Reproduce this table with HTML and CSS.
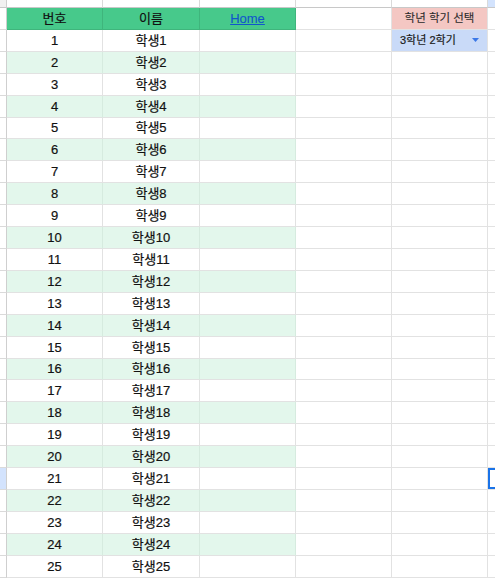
FILE: index.html
```html
<!DOCTYPE html>
<html lang="ko">
<head>
<meta charset="utf-8">
<link rel="stylesheet" href="styles.css">
</head>
<body>
<div class="sheet">
  <div class="row top"><div class="rh corner"></div><div class="ch"></div><div class="ch"></div><div class="ch"></div><div class="ch"></div><div class="ch"></div><div class="ch sel"></div></div>
  <div class="row"><div class="rh"></div><div class="c hd">번호</div><div class="c hd">이름</div><div class="c hd"><a class="link" href="#">Home</a></div><div class="c"></div><div class="c pink">학년 학기 선택</div><div class="c edge"></div></div>
  <div class="row"><div class="rh"></div><div class="c">1</div><div class="c">학생1</div><div class="c"></div><div class="c"></div><div class="c drop"><span>3학년 2학기</span><svg class="arrow" width="7" height="4" viewBox="0 0 7 4"><path d="M0 0h7L3.5 4z" fill="#3b78e7"/></svg></div><div class="c edge"></div></div>
  <div class="row alt"><div class="rh"></div><div class="c">2</div><div class="c">학생2</div><div class="c"></div><div class="c"></div><div class="c"></div><div class="c edge"></div></div>
  <div class="row"><div class="rh"></div><div class="c">3</div><div class="c">학생3</div><div class="c"></div><div class="c"></div><div class="c"></div><div class="c edge"></div></div>
  <div class="row alt"><div class="rh"></div><div class="c">4</div><div class="c">학생4</div><div class="c"></div><div class="c"></div><div class="c"></div><div class="c edge"></div></div>
  <div class="row"><div class="rh"></div><div class="c">5</div><div class="c">학생5</div><div class="c"></div><div class="c"></div><div class="c"></div><div class="c edge"></div></div>
  <div class="row alt"><div class="rh"></div><div class="c">6</div><div class="c">학생6</div><div class="c"></div><div class="c"></div><div class="c"></div><div class="c edge"></div></div>
  <div class="row"><div class="rh"></div><div class="c">7</div><div class="c">학생7</div><div class="c"></div><div class="c"></div><div class="c"></div><div class="c edge"></div></div>
  <div class="row alt"><div class="rh"></div><div class="c">8</div><div class="c">학생8</div><div class="c"></div><div class="c"></div><div class="c"></div><div class="c edge"></div></div>
  <div class="row"><div class="rh"></div><div class="c">9</div><div class="c">학생9</div><div class="c"></div><div class="c"></div><div class="c"></div><div class="c edge"></div></div>
  <div class="row alt"><div class="rh"></div><div class="c">10</div><div class="c">학생10</div><div class="c"></div><div class="c"></div><div class="c"></div><div class="c edge"></div></div>
  <div class="row"><div class="rh"></div><div class="c">11</div><div class="c">학생11</div><div class="c"></div><div class="c"></div><div class="c"></div><div class="c edge"></div></div>
  <div class="row alt"><div class="rh"></div><div class="c">12</div><div class="c">학생12</div><div class="c"></div><div class="c"></div><div class="c"></div><div class="c edge"></div></div>
  <div class="row"><div class="rh"></div><div class="c">13</div><div class="c">학생13</div><div class="c"></div><div class="c"></div><div class="c"></div><div class="c edge"></div></div>
  <div class="row alt"><div class="rh"></div><div class="c">14</div><div class="c">학생14</div><div class="c"></div><div class="c"></div><div class="c"></div><div class="c edge"></div></div>
  <div class="row"><div class="rh"></div><div class="c">15</div><div class="c">학생15</div><div class="c"></div><div class="c"></div><div class="c"></div><div class="c edge"></div></div>
  <div class="row alt"><div class="rh"></div><div class="c">16</div><div class="c">학생16</div><div class="c"></div><div class="c"></div><div class="c"></div><div class="c edge"></div></div>
  <div class="row"><div class="rh"></div><div class="c">17</div><div class="c">학생17</div><div class="c"></div><div class="c"></div><div class="c"></div><div class="c edge"></div></div>
  <div class="row alt"><div class="rh"></div><div class="c">18</div><div class="c">학생18</div><div class="c"></div><div class="c"></div><div class="c"></div><div class="c edge"></div></div>
  <div class="row"><div class="rh"></div><div class="c">19</div><div class="c">학생19</div><div class="c"></div><div class="c"></div><div class="c"></div><div class="c edge"></div></div>
  <div class="row alt"><div class="rh"></div><div class="c">20</div><div class="c">학생20</div><div class="c"></div><div class="c"></div><div class="c"></div><div class="c edge"></div></div>
  <div class="row"><div class="rh selrow"></div><div class="c">21</div><div class="c">학생21</div><div class="c"></div><div class="c"></div><div class="c"></div><div class="c edge active"></div></div>
  <div class="row alt"><div class="rh"></div><div class="c">22</div><div class="c">학생22</div><div class="c"></div><div class="c"></div><div class="c"></div><div class="c edge"></div></div>
  <div class="row"><div class="rh"></div><div class="c">23</div><div class="c">학생23</div><div class="c"></div><div class="c"></div><div class="c"></div><div class="c edge"></div></div>
  <div class="row alt"><div class="rh"></div><div class="c">24</div><div class="c">학생24</div><div class="c"></div><div class="c"></div><div class="c"></div><div class="c edge"></div></div>
  <div class="row"><div class="rh"></div><div class="c">25</div><div class="c">학생25</div><div class="c"></div><div class="c"></div><div class="c"></div><div class="c edge"></div></div>
</div>
</body>
</html>
```

FILE: styles.css
```css
html, body {
  margin: 0;
  padding: 0;
  background: #ffffff;
}
body {
  font-family: "Liberation Sans", "Noto Sans CJK KR", Arial, sans-serif;
  font-size: 13px;
  color: #111111;
  width: 495px;
  height: 582px;
  overflow: hidden;
}
.sheet {
  display: flex;
  flex-direction: column;
}
.row {
  display: grid;
  grid-template-columns: 7px 96px 97px 96px 96px 96px 1fr;
  height: 21.92px;
}
.row.top {
  height: 8px;
}
.ch {
  border-right: 1px solid #dadada;
  border-bottom: 1px solid #c8c8c8;
  background: #ffffff;
}
.ch.sel {
  background: #d3e3fd;
  border-right: none;
}
.rh {
  border-right: 1px solid #cfcfcf;
  border-bottom: 1px solid #dadada;
  background: #ffffff;
}
.rh.corner {
  background: #f1f1f1;
  border-bottom: 1px solid #c8c8c8;
}
.rh.selrow {
  background: #d3e3fd;
}
.c {
  border-right: 1px solid #e2e2e2;
  border-bottom: 1px solid #e2e2e2;
  display: flex;
  align-items: center;
  justify-content: center;
  white-space: nowrap;
  overflow: hidden;
  line-height: 1;
  -webkit-text-stroke: 0.2px currentColor;
}
.c.hd {
  background: #47c98b;
  border-right-color: #3fb57c;
  border-bottom-color: #3fb57c;
}
.row.alt .c:nth-child(-n+4) {
  background: #e3f7ec;
  border-right-color: #d6ebdf;
}
.c.edge {
  border-right: none;
}
.c.edge.active {
  box-shadow: inset 2px 2px 0 #1a73e8, inset 0 -2px 0 #1a73e8;
}
.link {
  color: #1155cc;
  text-decoration: underline;
  -webkit-text-stroke: 0.1px currentColor;
}
.c.pink {
  background: #f4c7c3;
  font-size: 11.5px;
  color: #2a2a2a;
  -webkit-text-stroke: 0.1px currentColor;
}
.c.drop {
  background: #c9daf8;
  justify-content: space-between;
  padding: 0 8px 0 8px;
  font-size: 11px;
  color: #1a1a1a;
}
.arrow {
  display: block;
}
```
